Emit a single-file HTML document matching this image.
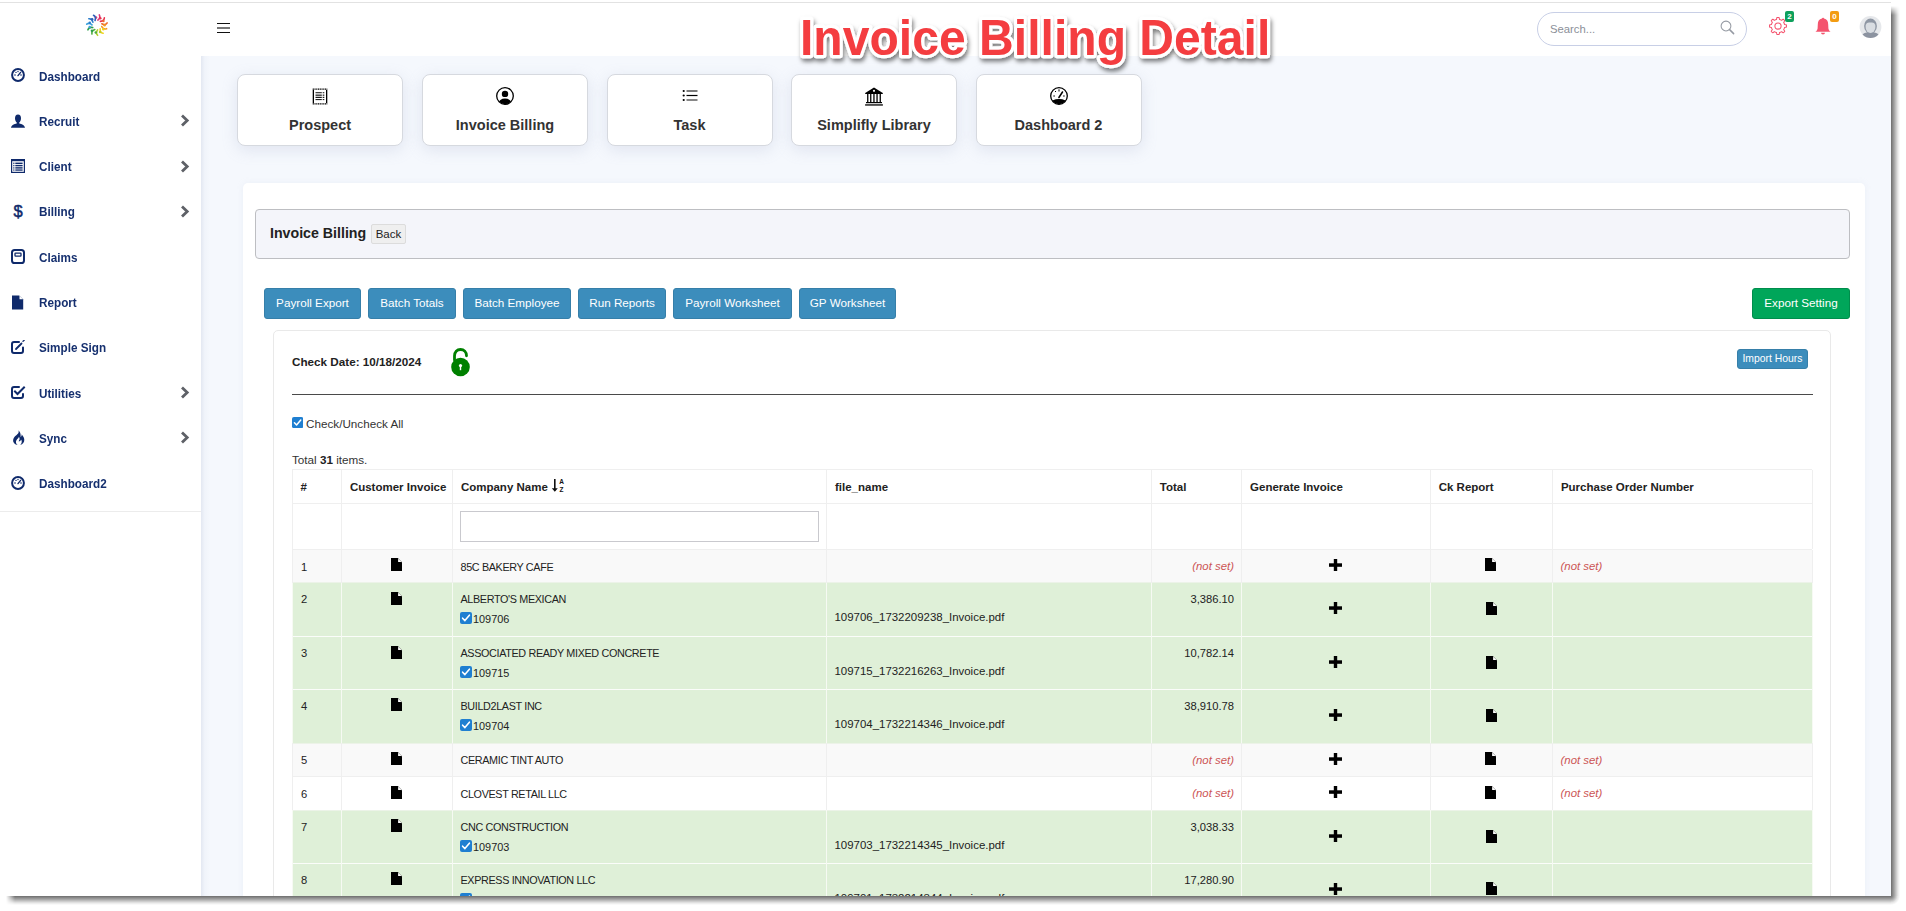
<!DOCTYPE html><html><head><meta charset="utf-8"><title>Invoice Billing Detail</title><style>
*{box-sizing:border-box;margin:0;padding:0}
html,body{width:1906px;height:911px;overflow:hidden;background:#fff;font-family:"Liberation Sans",sans-serif;position:relative}
.a{position:absolute;white-space:nowrap}
#topline{position:absolute;left:0;top:2px;width:1891px;height:1px;background:#e2e2e2}
#shadow{position:absolute;left:0;top:3px;width:1891px;height:893px;background:#f5f8fd}
#shR{position:absolute;left:1891px;top:6px;width:9px;height:890px;background:linear-gradient(90deg,rgba(0,0,0,.57),rgba(0,0,0,.36) 35%,rgba(0,0,0,.1) 75%,rgba(0,0,0,0));-webkit-mask-image:linear-gradient(180deg,transparent 0,#000 9px)}
#shB{position:absolute;left:6px;top:896px;width:1885px;height:9px;background:linear-gradient(180deg,rgba(0,0,0,.57),rgba(0,0,0,.36) 35%,rgba(0,0,0,.1) 75%,rgba(0,0,0,0));-webkit-mask-image:linear-gradient(90deg,transparent 0,#000 9px)}
#shC{position:absolute;left:1891px;top:896px;width:9px;height:9px;background:radial-gradient(circle at 0 0,rgba(0,0,0,.57),rgba(0,0,0,.36) 3px,rgba(0,0,0,.1) 6.5px,rgba(0,0,0,0) 9px)}
#clip{position:absolute;left:0;top:3px;width:1891px;height:893px;overflow:hidden}
#pg{position:absolute;left:0;top:-3px;width:1891px;height:896px}
#header{position:absolute;left:0;top:3px;width:1891px;height:53px;background:#fff}
#sidebar{position:absolute;left:0;top:56px;width:201px;height:840px;background:#fff}
#sideline{position:absolute;left:0;top:511px;width:201px;height:1px;background:#ececec}
.st{font-weight:bold;font-size:12.6px;color:#16306f;line-height:14px;transform:scaleX(.93);transform-origin:0 0}
.tile{position:absolute;top:73.5px;width:166px;height:72px;background:#fff;border:1px solid #d6d9df;border-radius:8px;box-shadow:0 4px 16px rgba(140,150,185,.2)}
.tile .tt{position:absolute;left:0;right:0;top:42.5px;text-align:center;font-weight:bold;font-size:14.5px;line-height:16px;color:#333}
.tile svg{position:absolute;top:12.3px;left:50%;transform:translateX(-50%)}
.btn{position:absolute;top:288px;height:31px;background:#3c8dbc;border:1px solid #367fa9;border-radius:3px;color:#fff;font-size:11.7px;line-height:27.5px;text-align:center;white-space:nowrap}
#card{position:absolute;left:242.5px;top:183px;width:1622px;height:760px;background:#fff;border-radius:5px;box-shadow:0 0 6px rgba(180,190,210,.15)}
#panel{position:absolute;left:255px;top:209px;width:1595px;height:50px;background:#f4f5fa;border:1px solid #bdbec2;border-radius:4px}
#inner{position:absolute;left:273px;top:330px;width:1558px;height:700px;border:1px solid #e9e9e9;border-radius:5px}
.cell{position:absolute;white-space:nowrap}
.th{font-weight:bold;font-size:11.5px;color:#222;line-height:14px}
.td{font-size:11.2px;color:#222;line-height:14px}
.up{font-size:10.8px;letter-spacing:-0.35px}
.ns{font-style:italic;color:#c55;font-size:11.4px;line-height:14px}
.vl{position:absolute;width:1px}
.hl{position:absolute;height:1px}
</style></head><body>
<div id="topline"></div><div id="shadow"></div><div id="shR"></div><div id="shB"></div><div id="shC"></div><div id="clip"><div id="pg">
<div id="header"></div>
<svg class="a" style="left:85px;top:13px" width="24" height="24" viewBox="0 0 24 24"><path d="M12.87,7.08 Q15.89,4.78 14.29,1.96" fill="none" stroke="#e0357a" stroke-width="1.6" stroke-linecap="round"/><circle cx="11.05" cy="4.46" r="1.25" fill="#e0357a"/><path d="M15.39,8.33 Q19.18,8.03 19.36,4.79" fill="none" stroke="#e8334f" stroke-width="1.6" stroke-linecap="round"/><circle cx="15.28" cy="5.14" r="1.25" fill="#e8334f"/><path d="M16.84,10.74 Q20.18,12.54 22.09,9.91" fill="none" stroke="#ee6a2c" stroke-width="1.6" stroke-linecap="round"/><circle cx="18.46" cy="8.00" r="1.25" fill="#ee6a2c"/><path d="M16.75,13.56 Q18.59,16.88 21.61,15.70" fill="none" stroke="#f39a1f" stroke-width="1.6" stroke-linecap="round"/><circle cx="19.60" cy="12.13" r="1.25" fill="#f39a1f"/><path d="M15.15,15.88 Q14.91,19.67 18.09,20.31" fill="none" stroke="#f0d21a" stroke-width="1.6" stroke-linecap="round"/><circle cx="18.32" cy="16.22" r="1.25" fill="#f0d21a"/><path d="M12.55,16.97 Q10.30,20.02 12.63,22.28" fill="none" stroke="#b5cf2a" stroke-width="1.6" stroke-linecap="round"/><circle cx="15.04" cy="18.97" r="1.25" fill="#b5cf2a"/><path d="M9.78,16.48 Q6.23,17.83 6.97,20.99" fill="none" stroke="#4fae3f" stroke-width="1.6" stroke-linecap="round"/><circle cx="10.79" cy="19.50" r="1.25" fill="#4fae3f"/><path d="M7.71,14.57 Q4.00,13.79 2.91,16.84" fill="none" stroke="#2e9e4c" stroke-width="1.6" stroke-linecap="round"/><circle cx="6.92" cy="17.66" r="1.25" fill="#2e9e4c"/><path d="M7.00,11.84 Q4.30,9.17 1.73,11.16" fill="none" stroke="#3aa0dc" stroke-width="1.6" stroke-linecap="round"/><circle cx="4.67" cy="14.01" r="1.25" fill="#3aa0dc"/><path d="M7.88,9.16 Q7.05,5.46 3.82,5.74" fill="none" stroke="#2a7ccc" stroke-width="1.6" stroke-linecap="round"/><circle cx="4.75" cy="9.73" r="1.25" fill="#2a7ccc"/><path d="M10.07,7.39 Q11.37,3.82 8.50,2.31" fill="none" stroke="#2f5fb8" stroke-width="1.6" stroke-linecap="round"/><circle cx="7.12" cy="6.17" r="1.25" fill="#2f5fb8"/></svg>
<div class="a" style="left:217px;top:23px;width:13px;height:1px;background:#111"></div>
<div class="a" style="left:217px;top:27px;width:13px;height:2px;background:#777"></div>
<div class="a" style="left:217px;top:32px;width:13px;height:1px;background:#111"></div>
<svg class="a" style="left:790px;top:8px;overflow:visible" width="500" height="62" viewBox="0 0 500 62"><defs><filter id="tsh" x="-5%" y="-20%" width="110%" height="150%"><feDropShadow dx="1.5" dy="3.2" stdDeviation="2.1" flood-color="#000" flood-opacity="0.5"/></filter></defs><text x="10" y="0" transform="translate(0,47) scale(1,1.045)" font-family="Liberation Sans" font-weight="bold" font-size="48.1" fill="#f43d41" stroke="#fff" stroke-width="6.2" stroke-linejoin="round" paint-order="stroke" filter="url(#tsh)">Invoice Billing Detail</text></svg>
<div class="a" style="left:1537px;top:12px;width:210px;height:34px;border:1px solid #c8cfe6;border-radius:17px;background:#fff"></div>
<div class="a" style="left:1550px;top:22px;font-size:11.3px;line-height:14px;color:#8b9099">Search...</div>
<svg class="a" style="left:1720px;top:20px" width="15" height="15" viewBox="0 0 15 15"><circle cx="6" cy="6" r="4.9" fill="none" stroke="#959aa3" stroke-width="1.05"/><line x1="9.6" y1="9.6" x2="13.6" y2="13.6" stroke="#959aa3" stroke-width="1.5" stroke-linecap="round"/></svg>
<svg class="a" style="left:1769px;top:17px" width="18" height="18" viewBox="0 0 18 18"><path d="M6.44,2.81 L6.60,2.75 L6.76,2.68 L6.93,2.63 L7.10,2.58 L7.27,2.53 L7.44,2.49 L7.56,2.24 L7.65,1.71 L7.75,1.10 L7.90,0.61 L8.10,0.45 L8.33,0.43 L8.55,0.41 L8.77,0.40 L9.00,0.40 L9.23,0.40 L9.45,0.41 L9.67,0.43 L9.90,0.45 L10.10,0.61 L10.25,1.10 L10.35,1.71 L10.44,2.24 L10.56,2.49 L10.73,2.53 L10.90,2.58 L11.07,2.63 L11.24,2.68 L11.40,2.75 L11.56,2.81 L11.73,2.88 L11.88,2.95 L12.04,3.03 L12.20,3.11 L12.35,3.20 L12.50,3.29 L12.77,3.20 L13.20,2.89 L13.70,2.53 L14.15,2.29 L14.41,2.32 L14.59,2.46 L14.75,2.61 L14.92,2.76 L15.08,2.92 L15.24,3.08 L15.39,3.25 L15.54,3.41 L15.68,3.59 L15.71,3.85 L15.47,4.30 L15.11,4.80 L14.80,5.23 L14.71,5.50 L14.80,5.65 L14.89,5.80 L14.97,5.96 L15.05,6.12 L15.12,6.27 L15.19,6.44 L15.25,6.60 L15.32,6.76 L15.37,6.93 L15.42,7.10 L15.47,7.27 L15.51,7.44 L15.76,7.56 L16.29,7.65 L16.90,7.75 L17.39,7.90 L17.55,8.10 L17.57,8.33 L17.59,8.55 L17.60,8.77 L17.60,9.00 L17.60,9.23 L17.59,9.45 L17.57,9.67 L17.55,9.90 L17.39,10.10 L16.90,10.25 L16.29,10.35 L15.76,10.44 L15.51,10.56 L15.47,10.73 L15.42,10.90 L15.37,11.07 L15.32,11.24 L15.25,11.40 L15.19,11.56 L15.12,11.73 L15.05,11.88 L14.97,12.04 L14.89,12.20 L14.80,12.35 L14.71,12.50 L14.80,12.77 L15.11,13.20 L15.47,13.70 L15.71,14.15 L15.68,14.41 L15.54,14.59 L15.39,14.75 L15.24,14.92 L15.08,15.08 L14.92,15.24 L14.75,15.39 L14.59,15.54 L14.41,15.68 L14.15,15.71 L13.70,15.47 L13.20,15.11 L12.77,14.80 L12.50,14.71 L12.35,14.80 L12.20,14.89 L12.04,14.97 L11.88,15.05 L11.73,15.12 L11.56,15.19 L11.40,15.25 L11.24,15.32 L11.07,15.37 L10.90,15.42 L10.73,15.47 L10.56,15.51 L10.44,15.76 L10.35,16.29 L10.25,16.90 L10.10,17.39 L9.90,17.55 L9.67,17.57 L9.45,17.59 L9.23,17.60 L9.00,17.60 L8.77,17.60 L8.55,17.59 L8.33,17.57 L8.10,17.55 L7.90,17.39 L7.75,16.90 L7.65,16.29 L7.56,15.76 L7.44,15.51 L7.27,15.47 L7.10,15.42 L6.93,15.37 L6.76,15.32 L6.60,15.25 L6.44,15.19 L6.27,15.12 L6.12,15.05 L5.96,14.97 L5.80,14.89 L5.65,14.80 L5.50,14.71 L5.23,14.80 L4.80,15.11 L4.30,15.47 L3.85,15.71 L3.59,15.68 L3.41,15.54 L3.25,15.39 L3.08,15.24 L2.92,15.08 L2.76,14.92 L2.61,14.75 L2.46,14.59 L2.32,14.41 L2.29,14.15 L2.53,13.70 L2.89,13.20 L3.20,12.77 L3.29,12.50 L3.20,12.35 L3.11,12.20 L3.03,12.04 L2.95,11.88 L2.88,11.73 L2.81,11.56 L2.75,11.40 L2.68,11.24 L2.63,11.07 L2.58,10.90 L2.53,10.73 L2.49,10.56 L2.24,10.44 L1.71,10.35 L1.10,10.25 L0.61,10.10 L0.45,9.90 L0.43,9.67 L0.41,9.45 L0.40,9.23 L0.40,9.00 L0.40,8.77 L0.41,8.55 L0.43,8.33 L0.45,8.10 L0.61,7.90 L1.10,7.75 L1.71,7.65 L2.24,7.56 L2.49,7.44 L2.53,7.27 L2.58,7.10 L2.63,6.93 L2.68,6.76 L2.75,6.60 L2.81,6.44 L2.88,6.27 L2.95,6.12 L3.03,5.96 L3.11,5.80 L3.20,5.65 L3.29,5.50 L3.20,5.23 L2.89,4.80 L2.53,4.30 L2.29,3.85 L2.32,3.59 L2.46,3.41 L2.61,3.25 L2.76,3.08 L2.92,2.92 L3.08,2.76 L3.25,2.61 L3.41,2.46 L3.59,2.32 L3.85,2.29 L4.30,2.53 L4.80,2.89 L5.23,3.20 L5.50,3.29 L5.65,3.20 L5.80,3.11 L5.96,3.03 L6.12,2.95 L6.27,2.88Z" fill="none" stroke="#f4516c" stroke-width="1.05" stroke-linejoin="round"/><circle cx="9" cy="9" r="3.1" fill="none" stroke="#f4516c" stroke-width="1.05"/></svg>
<div class="a" style="left:1785px;top:11px;width:9px;height:11px;background:#0ea05c;border-radius:2px;color:#fff;font-size:8px;font-weight:bold;line-height:11px;text-align:center">2</div>
<svg class="a" style="left:1815px;top:17px" width="16" height="18" viewBox="0 0 16 18"><path d="M8 0.8 C8.6 0.8 9 1.2 9 1.6 C12 2.2 13.2 4.6 13.2 7.5 L13.4 11.5 C13.6 13 14.6 14 15.6 14.8 L0.4 14.8 C1.4 14 2.4 13 2.6 11.5 L2.8 7.5 C2.8 4.6 4 2.2 7 1.6 C7 1.2 7.4 0.8 8 0.8Z" fill="#f4546e"/><path d="M6 15.8 A2 1.6 0 0 0 10 15.8Z" fill="#f4546e"/></svg>
<div class="a" style="left:1830px;top:11px;width:9px;height:11px;background:#f39c12;border-radius:2px;color:#fff;font-size:8px;font-weight:bold;line-height:11px;text-align:center">0</div>
<svg class="a" style="left:1859px;top:16px" width="23" height="22" viewBox="0 0 23 22"><defs><clipPath id="avc"><circle cx="11.5" cy="11" r="10.9"/></clipPath></defs><circle cx="11.5" cy="11" r="10.9" fill="#e6e8eb"/><g clip-path="url(#avc)"><ellipse cx="11.5" cy="20.5" rx="9" ry="4.6" fill="#8c93a0"/><ellipse cx="11.5" cy="10" rx="6.4" ry="7.6" fill="#8f97a4"/><ellipse cx="11.5" cy="10.9" rx="4.9" ry="6.2" fill="#d9dde2"/><path d="M6.5 6 C8 3.8 15 3.8 16.5 6 L16.5 7.5 C14 6 9 6 6.5 7.5Z" fill="#8f97a4"/></g></svg>
<div id="sidebar"></div><div id="sideline"></div>
<div class="a st" style="left:39px;top:69.6px">Dashboard</div>
<svg class="a" style="left:10.5px;top:68.2px" width="15" height="15" viewBox="0 0 15 15"><circle cx="7" cy="7" r="5.9" fill="none" stroke="#0f2a6b" stroke-width="2"/><path d="M7 7.6 L9.6 4.4" stroke="#0f2a6b" stroke-width="1.4" stroke-linecap="round"/><circle cx="4" cy="7" r=".8" fill="#0f2a6b"/><circle cx="5" cy="4.4" r=".7" fill="#0f2a6b"/><circle cx="7" cy="3.5" r=".7" fill="#0f2a6b"/><circle cx="10" cy="7" r=".8" fill="#0f2a6b"/></svg>
<div class="a st" style="left:39px;top:114.9px">Recruit</div>
<svg class="a" style="left:10.5px;top:113.5px" width="15" height="15" viewBox="0 0 15 15"><path d="M7 0.5 C9 0.5 10 2 10 4.2 C10 6.4 9 8 8.2 8.6 L8.3 9.4 C10.5 10 13.5 10.8 14 13.8 L0 13.8 C0.5 10.8 3.5 10 5.7 9.4 L5.8 8.6 C5 8 4 6.4 4 4.2 C4 2 5 0.5 7 0.5Z" fill="#0f2a6b"/></svg>
<svg class="a" style="left:180px;top:114.3px" width="10" height="13" viewBox="0 0 10 13"><path d="M2 1.5 L7.2 6.5 L2 11.5" fill="none" stroke="#5e6167" stroke-width="2.8" stroke-linejoin="miter"/></svg>
<div class="a st" style="left:39px;top:160.1px">Client</div>
<svg class="a" style="left:10.5px;top:158.7px" width="15" height="15" viewBox="0 0 15 15"><rect x="0.6" y="0.6" width="12.8" height="12.8" fill="none" stroke="#0f2a6b" stroke-width="1.2"/><rect x="0.6" y="0.6" width="12.8" height="1.6" fill="#0f2a6b"/><rect x="2.3" y="3.6" width="1.1" height="1.4" fill="#0f2a6b"/><rect x="4.3" y="3.6" width="7.3" height="1.4" fill="#0f2a6b"/><rect x="2.3" y="5.9" width="1.1" height="1.4" fill="#0f2a6b"/><rect x="4.3" y="5.9" width="7.3" height="1.4" fill="#0f2a6b"/><rect x="2.3" y="8.2" width="1.1" height="1.4" fill="#0f2a6b"/><rect x="4.3" y="8.2" width="7.3" height="1.4" fill="#0f2a6b"/><rect x="2.3" y="10.4" width="1.1" height="1.3" fill="#0f2a6b"/><rect x="4.3" y="10.4" width="7.3" height="1.3" fill="#0f2a6b"/></svg>
<svg class="a" style="left:180px;top:159.5px" width="10" height="13" viewBox="0 0 10 13"><path d="M2 1.5 L7.2 6.5 L2 11.5" fill="none" stroke="#5e6167" stroke-width="2.8" stroke-linejoin="miter"/></svg>
<div class="a st" style="left:39px;top:205.4px">Billing</div>
<svg class="a" style="left:10.5px;top:204.0px" width="15" height="15" viewBox="0 0 15 15"><text x="7" y="12.6" text-anchor="middle" font-family="Liberation Sans" font-size="16.5" fill="#0f2a6b" stroke="#0f2a6b" stroke-width=".5">$</text></svg>
<svg class="a" style="left:180px;top:204.8px" width="10" height="13" viewBox="0 0 10 13"><path d="M2 1.5 L7.2 6.5 L2 11.5" fill="none" stroke="#5e6167" stroke-width="2.8" stroke-linejoin="miter"/></svg>
<div class="a st" style="left:39px;top:250.7px">Claims</div>
<svg class="a" style="left:10.5px;top:249.3px" width="15" height="15" viewBox="0 0 15 15"><rect x="1" y="1" width="12" height="13" rx="2.6" fill="none" stroke="#0f2a6b" stroke-width="2"/><rect x="4" y="4.2" width="6" height="3" rx=".6" fill="none" stroke="#0f2a6b" stroke-width="1.3"/></svg>
<div class="a st" style="left:39px;top:296.0px">Report</div>
<svg class="a" style="left:10.5px;top:294.6px" width="15" height="15" viewBox="0 0 15 15"><path d="M1 0.5 L8.2 0.5 L12.2 4.5 L12.2 14.5 L1 14.5Z" fill="#0f2a6b"/><path d="M8.5 0.8 L8.5 4.2 L11.9 4.2Z" fill="#fff"/></svg>
<div class="a st" style="left:39px;top:341.2px">Simple Sign</div>
<svg class="a" style="left:10.5px;top:339.8px" width="15" height="15" viewBox="0 0 15 15"><path d="M8 2 L3 2 C1.8 2 1 2.8 1 4 L1 11 C1 12.2 1.8 13 3 13 L10 13 C11.2 13 12 12.2 12 11 L12 7.5" fill="none" stroke="#0f2a6b" stroke-width="2" stroke-linecap="round"/><path d="M5 9 L10.5 3.5" stroke="#0f2a6b" stroke-width="1.8" stroke-linecap="round"/><path d="M12 1.3 L13.2 .3" stroke="#0f2a6b" stroke-width="1.3" stroke-linecap="round"/></svg>
<div class="a st" style="left:39px;top:386.5px">Utilities</div>
<svg class="a" style="left:10.5px;top:385.1px" width="15" height="15" viewBox="0 0 15 15"><path d="M8 2 L3 2 C1.8 2 1 2.8 1 4 L1 11 C1 12.2 1.8 13 3 13 L10 13 C11.2 13 12 12.2 12 11 L12 9" fill="none" stroke="#0f2a6b" stroke-width="2" stroke-linecap="round"/><path d="M4 6.5 L6.5 9 L13 2.5" fill="none" stroke="#0f2a6b" stroke-width="2" stroke-linecap="square"/></svg>
<svg class="a" style="left:180px;top:385.9px" width="10" height="13" viewBox="0 0 10 13"><path d="M2 1.5 L7.2 6.5 L2 11.5" fill="none" stroke="#5e6167" stroke-width="2.8" stroke-linejoin="miter"/></svg>
<div class="a st" style="left:39px;top:431.8px">Sync</div>
<svg class="a" style="left:10.5px;top:430.4px" width="15" height="15" viewBox="0 0 15 15"><path d="M7.2 0.2 C8.6 2.4 6.8 4 5 5.4 C2.2 7.6 1.2 10.8 3.2 13.2 C4.2 14.3 5.6 14.8 6.6 14.9 C4.9 13.6 4.4 11.6 5.6 9.9 C6.4 8.8 7.6 8.2 7.9 6.8 C9.2 8.6 8.4 10.2 7.6 11.2 C9 11.4 9.8 10.4 10 9.4 C11.4 11 10.8 13.4 9.2 14.9 C11.8 14.4 13.4 12.4 13.3 9.8 C13.2 7.4 11.8 5.9 10.6 4.3 C10.8 5.6 10.4 6.6 9.6 7 C10 4.2 9.2 1.6 7.2 0.2Z" fill="#0f2a6b"/></svg>
<svg class="a" style="left:180px;top:431.2px" width="10" height="13" viewBox="0 0 10 13"><path d="M2 1.5 L7.2 6.5 L2 11.5" fill="none" stroke="#5e6167" stroke-width="2.8" stroke-linejoin="miter"/></svg>
<div class="a st" style="left:39px;top:477.0px">Dashboard2</div>
<svg class="a" style="left:10.5px;top:475.6px" width="15" height="15" viewBox="0 0 15 15"><circle cx="7" cy="7" r="5.9" fill="none" stroke="#0f2a6b" stroke-width="2"/><path d="M7 7.6 L9.6 4.4" stroke="#0f2a6b" stroke-width="1.4" stroke-linecap="round"/><circle cx="4" cy="7" r=".8" fill="#0f2a6b"/><circle cx="5" cy="4.4" r=".7" fill="#0f2a6b"/><circle cx="7" cy="3.5" r=".7" fill="#0f2a6b"/><circle cx="10" cy="7" r=".8" fill="#0f2a6b"/></svg>
<div class="a" style="left:201px;top:56px;width:9px;height:840px;background:linear-gradient(90deg,rgba(205,212,228,.45),rgba(225,230,242,.25) 40%,rgba(243,246,251,0))"></div>
<div class="tile" style="left:237px"><svg style="margin-left:-0.5px;margin-top:1.3px" width="17" height="17" viewBox="0 0 17 17"><rect x="1.2" y="1.8" width="1.3" height="13.4" fill="#000"/><rect x="14.5" y="1.8" width="1.3" height="13.4" fill="#000"/><path d="M1.2 1.2 H15.8 M1.2 15.8 H15.8" stroke="#000" stroke-width="1.3" stroke-dasharray="1.2 .55"/><rect x="4" y="4" width="6.3" height="1.3" fill="#444"/><rect x="11.2" y="4" width="1.6" height="1.3" fill="#444"/><rect x="4" y="6.6" width="6.3" height="1.1" fill="#000"/><rect x="11.2" y="6.6" width="1.6" height="1.1" fill="#000"/><rect x="4" y="8.8" width="6.3" height="1.1" fill="#000"/><rect x="11.2" y="8.8" width="1.6" height="1.1" fill="#000"/><rect x="4" y="11" width="6.3" height="1.1" fill="#222"/><rect x="11.2" y="11" width="1.6" height="1.1" fill="#222"/></svg><div class="tt">Prospect</div></div>
<div class="tile" style="left:422px"><svg width="18" height="18" viewBox="0 0 18 18"><defs><clipPath id="uc"><circle cx="9" cy="9" r="8.2"/></clipPath></defs><circle cx="9" cy="9" r="8.3" fill="none" stroke="#000" stroke-width="1.3"/><circle cx="9" cy="6.9" r="3.2" fill="#000"/><g clip-path="url(#uc)"><ellipse cx="9" cy="16.5" rx="6.5" ry="5" fill="#000"/></g></svg><div class="tt">Invoice Billing</div></div>
<div class="tile" style="left:606.5px"><svg width="17" height="17" viewBox="0 0 17 17"><circle cx="2.2" cy="4" r="1.1" fill="#000"/><circle cx="2.2" cy="8.5" r="1.1" fill="#000"/><circle cx="2.2" cy="13" r="1.1" fill="#000"/><rect x="5" y="3.3" width="11" height="1.4" fill="#444"/><rect x="5" y="7.9" width="11" height="1.2" fill="#000"/><rect x="5" y="12.3" width="11" height="1.4" fill="#555"/></svg><div class="tt">Task</div></div>
<div class="tile" style="left:791px"><svg width="19" height="19" viewBox="0 0 19 19"><path d="M9.5 0.5 L18.3 6 L18.3 7 L0.7 7 L0.7 6Z" fill="#000"/><circle cx="9.5" cy="3.8" r="1.1" fill="#fff"/><rect x="2.6" y="7" width="1.3" height="8.2" fill="#000"/><rect x="5.6" y="7" width="1.3" height="8.2" fill="#000"/><rect x="8.8" y="7" width="1.3" height="8.2" fill="#000"/><rect x="11.9" y="7" width="1.3" height="8.2" fill="#000"/><rect x="15.1" y="7" width="1.3" height="8.2" fill="#000"/><rect x="1.5" y="15" width="16" height="1.2" fill="#000"/><rect x="0.6" y="17.3" width="17.8" height="1.3" fill="#000"/></svg><div class="tt">Simplifly Library</div></div>
<div class="tile" style="left:975.5px"><svg width="18" height="18" viewBox="0 0 18 18"><defs><clipPath id="gc"><circle cx="9" cy="9" r="8.2"/></clipPath></defs><circle cx="9" cy="9" r="8.3" fill="none" stroke="#000" stroke-width="1.3"/><g clip-path="url(#gc)"><ellipse cx="9" cy="16.5" rx="8.5" ry="4.6" fill="#000"/></g><rect x="8.5" y="2.3" width="1" height="2.2" fill="#000"/><path d="M5 4 L6 5" stroke="#000" stroke-width="1"/><rect x="3.3" y="8.4" width="1.6" height="1.2" fill="#333"/><rect x="13.1" y="8.4" width="1.6" height="1.2" fill="#333"/><path d="M8.9 10.5 L12.5 5" stroke="#000" stroke-width="1.5" stroke-linecap="round"/></svg><div class="tt">Dashboard 2</div></div>
<div id="card"></div>
<div id="panel"></div>
<div class="a" style="left:270px;top:225.3px;font-weight:bold;font-size:14.2px;line-height:16px;color:#222">Invoice Billing</div>
<div class="a" style="left:371px;top:224px;width:35px;height:20px;background:#efefef;border:1px solid #dcdcdc;border-radius:2px;font-size:11.5px;line-height:18px;text-align:center;color:#222">Back</div>
<div class="btn" style="left:264px;width:97px">Payroll Export</div>
<div class="btn" style="left:368px;width:88px">Batch Totals</div>
<div class="btn" style="left:463px;width:108px">Batch Employee</div>
<div class="btn" style="left:578px;width:88px">Run Reports</div>
<div class="btn" style="left:673px;width:119px">Payroll Worksheet</div>
<div class="btn" style="left:799px;width:97px">GP Worksheet</div>
<div class="btn" style="left:1752px;width:98px;background:#00a65a;border-color:#008d4c">Export Setting</div>
<div id="inner"></div>
<div class="a" style="left:292px;top:355px;font-weight:bold;font-size:11.7px;line-height:14px;color:#222">Check Date: 10/18/2024</div>
<svg class="a" style="left:450px;top:348px" width="21" height="29" viewBox="0 0 21 29"><path d="M4.5 12 L4.5 8 C4.5 4 7 1.5 10.5 1.5 C14 1.5 16.5 4 16.5 7.8" fill="none" stroke="#008000" stroke-width="2.8" stroke-linecap="round"/><circle cx="10.5" cy="19" r="9.3" fill="#008000"/><circle cx="10.5" cy="17.6" r="1.6" fill="#fff"/><rect x="9.8" y="17.6" width="1.4" height="4.6" fill="#fff"/></svg>
<div class="btn" style="left:1737px;top:349px;width:71px;height:20px;font-size:10.4px;line-height:17px;border-radius:3px">Import Hours</div>
<div class="a" style="left:292px;top:394px;width:1521px;height:1px;background:#4a4a4a"></div>
<svg class="a" style="left:292px;top:417px" width="11.2" height="11.2" viewBox="0 0 12 12"><rect x="0" y="0" width="12" height="12" rx="2" fill="#1f7fd1"/><path d="M2.6 6.2 L4.9 8.6 L9.4 3.2" fill="none" stroke="#fff" stroke-width="1.6" stroke-linecap="round" stroke-linejoin="round"/></svg>
<div class="a" style="left:306px;top:417px;font-size:11.7px;line-height:14px;color:#333">Check/Uncheck All</div>
<div class="a" style="left:292px;top:453px;font-size:11.7px;line-height:14px;color:#333">Total <b style="color:#222">31</b> items.</div>
<div class="a" style="left:292px;top:469.5px;width:1520.4px;height:33.7px;background:#fff"></div>
<div class="a" style="left:292px;top:503.2px;width:1520.4px;height:46.3px;background:#fff"></div>
<div class="a" style="left:292px;top:549.5px;width:1520.4px;height:33.0px;background:#f9f9f9"></div>
<div class="a" style="left:292px;top:582.5px;width:1520.4px;height:54.0px;background:#dff0d8"></div>
<div class="a" style="left:292px;top:636.5px;width:1520.4px;height:53.0px;background:#dff0d8"></div>
<div class="a" style="left:292px;top:689.5px;width:1520.4px;height:53.5px;background:#dff0d8"></div>
<div class="a" style="left:292px;top:743.0px;width:1520.4px;height:33.6px;background:#f9f9f9"></div>
<div class="a" style="left:292px;top:776.6px;width:1520.4px;height:33.7px;background:#fff"></div>
<div class="a" style="left:292px;top:810.3px;width:1520.4px;height:52.9px;background:#dff0d8"></div>
<div class="a" style="left:292px;top:863.2px;width:1520.4px;height:53.3px;background:#dff0d8"></div>
<div class="hl" style="left:292px;top:469.0px;width:1520.4px;background:#efefef"></div>
<div class="hl" style="left:292px;top:502.7px;width:1520.4px;background:#efefef"></div>
<div class="hl" style="left:292px;top:549.0px;width:1520.4px;background:#efefef"></div>
<div class="hl" style="left:292px;top:582.0px;width:1520.4px;background:#ecf3e8"></div>
<div class="hl" style="left:292px;top:636.0px;width:1520.4px;background:#fbfdfa"></div>
<div class="hl" style="left:292px;top:689.0px;width:1520.4px;background:#fbfdfa"></div>
<div class="hl" style="left:292px;top:742.5px;width:1520.4px;background:#ecf3e8"></div>
<div class="hl" style="left:292px;top:776.1px;width:1520.4px;background:#efefef"></div>
<div class="hl" style="left:292px;top:809.8px;width:1520.4px;background:#ecf3e8"></div>
<div class="hl" style="left:292px;top:862.7px;width:1520.4px;background:#fbfdfa"></div>
<div class="vl" style="left:291.5px;top:469.5px;height:33.7px;background:#efefef"></div>
<div class="vl" style="left:340.9px;top:469.5px;height:33.7px;background:#efefef"></div>
<div class="vl" style="left:451.9px;top:469.5px;height:33.7px;background:#efefef"></div>
<div class="vl" style="left:826.0px;top:469.5px;height:33.7px;background:#efefef"></div>
<div class="vl" style="left:1150.8px;top:469.5px;height:33.7px;background:#efefef"></div>
<div class="vl" style="left:1241.1px;top:469.5px;height:33.7px;background:#efefef"></div>
<div class="vl" style="left:1429.7px;top:469.5px;height:33.7px;background:#efefef"></div>
<div class="vl" style="left:1551.9px;top:469.5px;height:33.7px;background:#efefef"></div>
<div class="vl" style="left:1811.9px;top:469.5px;height:33.7px;background:#efefef"></div>
<div class="vl" style="left:291.5px;top:503.2px;height:46.3px;background:#efefef"></div>
<div class="vl" style="left:340.9px;top:503.2px;height:46.3px;background:#efefef"></div>
<div class="vl" style="left:451.9px;top:503.2px;height:46.3px;background:#efefef"></div>
<div class="vl" style="left:826.0px;top:503.2px;height:46.3px;background:#efefef"></div>
<div class="vl" style="left:1150.8px;top:503.2px;height:46.3px;background:#efefef"></div>
<div class="vl" style="left:1241.1px;top:503.2px;height:46.3px;background:#efefef"></div>
<div class="vl" style="left:1429.7px;top:503.2px;height:46.3px;background:#efefef"></div>
<div class="vl" style="left:1551.9px;top:503.2px;height:46.3px;background:#efefef"></div>
<div class="vl" style="left:1811.9px;top:503.2px;height:46.3px;background:#efefef"></div>
<div class="vl" style="left:291.5px;top:549.5px;height:33.0px;background:#efefef"></div>
<div class="vl" style="left:340.9px;top:549.5px;height:33.0px;background:#efefef"></div>
<div class="vl" style="left:451.9px;top:549.5px;height:33.0px;background:#efefef"></div>
<div class="vl" style="left:826.0px;top:549.5px;height:33.0px;background:#efefef"></div>
<div class="vl" style="left:1150.8px;top:549.5px;height:33.0px;background:#efefef"></div>
<div class="vl" style="left:1241.1px;top:549.5px;height:33.0px;background:#efefef"></div>
<div class="vl" style="left:1429.7px;top:549.5px;height:33.0px;background:#efefef"></div>
<div class="vl" style="left:1551.9px;top:549.5px;height:33.0px;background:#efefef"></div>
<div class="vl" style="left:1811.9px;top:549.5px;height:33.0px;background:#efefef"></div>
<div class="vl" style="left:291.5px;top:582.5px;height:54.0px;background:#f6faf3"></div>
<div class="vl" style="left:340.9px;top:582.5px;height:54.0px;background:#f6faf3"></div>
<div class="vl" style="left:451.9px;top:582.5px;height:54.0px;background:#f6faf3"></div>
<div class="vl" style="left:826.0px;top:582.5px;height:54.0px;background:#f6faf3"></div>
<div class="vl" style="left:1150.8px;top:582.5px;height:54.0px;background:#f6faf3"></div>
<div class="vl" style="left:1241.1px;top:582.5px;height:54.0px;background:#f6faf3"></div>
<div class="vl" style="left:1429.7px;top:582.5px;height:54.0px;background:#f6faf3"></div>
<div class="vl" style="left:1551.9px;top:582.5px;height:54.0px;background:#f6faf3"></div>
<div class="vl" style="left:1811.9px;top:582.5px;height:54.0px;background:#f6faf3"></div>
<div class="vl" style="left:291.5px;top:636.5px;height:53.0px;background:#f6faf3"></div>
<div class="vl" style="left:340.9px;top:636.5px;height:53.0px;background:#f6faf3"></div>
<div class="vl" style="left:451.9px;top:636.5px;height:53.0px;background:#f6faf3"></div>
<div class="vl" style="left:826.0px;top:636.5px;height:53.0px;background:#f6faf3"></div>
<div class="vl" style="left:1150.8px;top:636.5px;height:53.0px;background:#f6faf3"></div>
<div class="vl" style="left:1241.1px;top:636.5px;height:53.0px;background:#f6faf3"></div>
<div class="vl" style="left:1429.7px;top:636.5px;height:53.0px;background:#f6faf3"></div>
<div class="vl" style="left:1551.9px;top:636.5px;height:53.0px;background:#f6faf3"></div>
<div class="vl" style="left:1811.9px;top:636.5px;height:53.0px;background:#f6faf3"></div>
<div class="vl" style="left:291.5px;top:689.5px;height:53.5px;background:#f6faf3"></div>
<div class="vl" style="left:340.9px;top:689.5px;height:53.5px;background:#f6faf3"></div>
<div class="vl" style="left:451.9px;top:689.5px;height:53.5px;background:#f6faf3"></div>
<div class="vl" style="left:826.0px;top:689.5px;height:53.5px;background:#f6faf3"></div>
<div class="vl" style="left:1150.8px;top:689.5px;height:53.5px;background:#f6faf3"></div>
<div class="vl" style="left:1241.1px;top:689.5px;height:53.5px;background:#f6faf3"></div>
<div class="vl" style="left:1429.7px;top:689.5px;height:53.5px;background:#f6faf3"></div>
<div class="vl" style="left:1551.9px;top:689.5px;height:53.5px;background:#f6faf3"></div>
<div class="vl" style="left:1811.9px;top:689.5px;height:53.5px;background:#f6faf3"></div>
<div class="vl" style="left:291.5px;top:743.0px;height:33.6px;background:#efefef"></div>
<div class="vl" style="left:340.9px;top:743.0px;height:33.6px;background:#efefef"></div>
<div class="vl" style="left:451.9px;top:743.0px;height:33.6px;background:#efefef"></div>
<div class="vl" style="left:826.0px;top:743.0px;height:33.6px;background:#efefef"></div>
<div class="vl" style="left:1150.8px;top:743.0px;height:33.6px;background:#efefef"></div>
<div class="vl" style="left:1241.1px;top:743.0px;height:33.6px;background:#efefef"></div>
<div class="vl" style="left:1429.7px;top:743.0px;height:33.6px;background:#efefef"></div>
<div class="vl" style="left:1551.9px;top:743.0px;height:33.6px;background:#efefef"></div>
<div class="vl" style="left:1811.9px;top:743.0px;height:33.6px;background:#efefef"></div>
<div class="vl" style="left:291.5px;top:776.6px;height:33.7px;background:#efefef"></div>
<div class="vl" style="left:340.9px;top:776.6px;height:33.7px;background:#efefef"></div>
<div class="vl" style="left:451.9px;top:776.6px;height:33.7px;background:#efefef"></div>
<div class="vl" style="left:826.0px;top:776.6px;height:33.7px;background:#efefef"></div>
<div class="vl" style="left:1150.8px;top:776.6px;height:33.7px;background:#efefef"></div>
<div class="vl" style="left:1241.1px;top:776.6px;height:33.7px;background:#efefef"></div>
<div class="vl" style="left:1429.7px;top:776.6px;height:33.7px;background:#efefef"></div>
<div class="vl" style="left:1551.9px;top:776.6px;height:33.7px;background:#efefef"></div>
<div class="vl" style="left:1811.9px;top:776.6px;height:33.7px;background:#efefef"></div>
<div class="vl" style="left:291.5px;top:810.3px;height:52.9px;background:#f6faf3"></div>
<div class="vl" style="left:340.9px;top:810.3px;height:52.9px;background:#f6faf3"></div>
<div class="vl" style="left:451.9px;top:810.3px;height:52.9px;background:#f6faf3"></div>
<div class="vl" style="left:826.0px;top:810.3px;height:52.9px;background:#f6faf3"></div>
<div class="vl" style="left:1150.8px;top:810.3px;height:52.9px;background:#f6faf3"></div>
<div class="vl" style="left:1241.1px;top:810.3px;height:52.9px;background:#f6faf3"></div>
<div class="vl" style="left:1429.7px;top:810.3px;height:52.9px;background:#f6faf3"></div>
<div class="vl" style="left:1551.9px;top:810.3px;height:52.9px;background:#f6faf3"></div>
<div class="vl" style="left:1811.9px;top:810.3px;height:52.9px;background:#f6faf3"></div>
<div class="vl" style="left:291.5px;top:863.2px;height:53.3px;background:#f6faf3"></div>
<div class="vl" style="left:340.9px;top:863.2px;height:53.3px;background:#f6faf3"></div>
<div class="vl" style="left:451.9px;top:863.2px;height:53.3px;background:#f6faf3"></div>
<div class="vl" style="left:826.0px;top:863.2px;height:53.3px;background:#f6faf3"></div>
<div class="vl" style="left:1150.8px;top:863.2px;height:53.3px;background:#f6faf3"></div>
<div class="vl" style="left:1241.1px;top:863.2px;height:53.3px;background:#f6faf3"></div>
<div class="vl" style="left:1429.7px;top:863.2px;height:53.3px;background:#f6faf3"></div>
<div class="vl" style="left:1551.9px;top:863.2px;height:53.3px;background:#f6faf3"></div>
<div class="vl" style="left:1811.9px;top:863.2px;height:53.3px;background:#f6faf3"></div>
<div class="cell th" style="left:300.5px;top:480px">#</div>
<div class="cell th" style="left:349.9px;top:480px">Customer Invoice</div>
<div class="cell th" style="left:460.9px;top:480px">Company Name</div>
<div class="cell th" style="left:835.0px;top:480px">file_name</div>
<div class="cell th" style="left:1159.8px;top:480px">Total</div>
<div class="cell th" style="left:1250.1px;top:480px">Generate Invoice</div>
<div class="cell th" style="left:1438.7px;top:480px">Ck Report</div>
<div class="cell th" style="left:1560.9px;top:480px">Purchase Order Number</div>
<svg class="a" style="left:551px;top:478px" width="14" height="15" viewBox="0 0 14 15"><rect x="3" y="1" width="1.6" height="11.5" fill="#111"/><path d="M0.8 10.3 L6.8 10.3 L3.8 13.8Z" fill="#111"/><text x="10.5" y="6" text-anchor="middle" font-family="Liberation Sans" font-weight="bold" font-size="6.5" fill="#111">A</text><text x="10.5" y="13.6" text-anchor="middle" font-family="Liberation Sans" font-weight="bold" font-size="6.5" fill="#111">Z</text></svg>
<div class="a" style="left:460px;top:511px;width:359px;height:31px;border:1px solid #c9c9ce;background:#fff"></div>
<div class="cell td" style="left:301px;top:559.5px">1</div>
<svg class="a" style="left:391px;top:558px" width="11" height="13" viewBox="0 0 11 13"><path d="M0 0 L6.8 0 L11 4.2 L11 13 L0 13Z" fill="#000"/><path d="M7.1 0.4 L7.1 3.9 L10.6 3.9Z" fill="#fff"/></svg>
<div class="cell td up" style="left:460.5px;top:559.5px">85C BAKERY CAFE</div>
<div class="cell ns" style="right:657px;top:558.7px">(not set)</div>
<svg class="a" style="left:1329px;top:559px" width="13" height="12" viewBox="0 0 13 12"><rect x="0" y="4.3" width="13" height="3.5" fill="#000"/><rect x="4.8" y="0" width="3.4" height="12" fill="#000"/></svg>
<svg class="a" style="left:1485px;top:558px" width="11" height="13" viewBox="0 0 11 13"><path d="M0 0 L6.8 0 L11 4.2 L11 13 L0 13Z" fill="#000"/><path d="M7.1 0.4 L7.1 3.9 L10.6 3.9Z" fill="#fff"/></svg>
<div class="cell ns" style="left:1560.5px;top:558.7px">(not set)</div>
<div class="cell td" style="left:301px;top:592.3px">2</div>
<svg class="a" style="left:391px;top:592px" width="11" height="13" viewBox="0 0 11 13"><path d="M0 0 L6.8 0 L11 4.2 L11 13 L0 13Z" fill="#000"/><path d="M7.1 0.4 L7.1 3.9 L10.6 3.9Z" fill="#fff"/></svg>
<div class="cell td up" style="left:460.5px;top:592.3px">ALBERTO'S MEXICAN</div>
<svg class="a" style="left:460px;top:612px" width="12" height="12" viewBox="0 0 12 12"><rect x="0" y="0" width="12" height="12" rx="2" fill="#1f7fd1"/><path d="M2.6 6.2 L4.9 8.6 L9.4 3.2" fill="none" stroke="#fff" stroke-width="1.6" stroke-linecap="round" stroke-linejoin="round"/></svg>
<div class="cell td" style="left:473px;top:612.3px;font-size:10.9px">109706</div>
<div class="cell td" style="left:834.5px;top:610.3px;font-size:11.45px">109706_1732209238_Invoice.pdf</div>
<div class="cell td" style="right:657px;top:592.3px">3,386.10</div>
<svg class="a" style="left:1329px;top:602px" width="13" height="12" viewBox="0 0 13 12"><rect x="0" y="4.3" width="13" height="3.5" fill="#000"/><rect x="4.8" y="0" width="3.4" height="12" fill="#000"/></svg>
<svg class="a" style="left:1486px;top:602px" width="11" height="13" viewBox="0 0 11 13"><path d="M0 0 L6.8 0 L11 4.2 L11 13 L0 13Z" fill="#000"/><path d="M7.1 0.4 L7.1 3.9 L10.6 3.9Z" fill="#fff"/></svg>
<div class="cell td" style="left:301px;top:646.3px">3</div>
<svg class="a" style="left:391px;top:646px" width="11" height="13" viewBox="0 0 11 13"><path d="M0 0 L6.8 0 L11 4.2 L11 13 L0 13Z" fill="#000"/><path d="M7.1 0.4 L7.1 3.9 L10.6 3.9Z" fill="#fff"/></svg>
<div class="cell td up" style="left:460.5px;top:646.3px">ASSOCIATED READY MIXED CONCRETE</div>
<svg class="a" style="left:460px;top:666px" width="12" height="12" viewBox="0 0 12 12"><rect x="0" y="0" width="12" height="12" rx="2" fill="#1f7fd1"/><path d="M2.6 6.2 L4.9 8.6 L9.4 3.2" fill="none" stroke="#fff" stroke-width="1.6" stroke-linecap="round" stroke-linejoin="round"/></svg>
<div class="cell td" style="left:473px;top:666.3px;font-size:10.9px">109715</div>
<div class="cell td" style="left:834.5px;top:664.3px;font-size:11.45px">109715_1732216263_Invoice.pdf</div>
<div class="cell td" style="right:657px;top:646.3px">10,782.14</div>
<svg class="a" style="left:1329px;top:656px" width="13" height="12" viewBox="0 0 13 12"><rect x="0" y="4.3" width="13" height="3.5" fill="#000"/><rect x="4.8" y="0" width="3.4" height="12" fill="#000"/></svg>
<svg class="a" style="left:1486px;top:656px" width="11" height="13" viewBox="0 0 11 13"><path d="M0 0 L6.8 0 L11 4.2 L11 13 L0 13Z" fill="#000"/><path d="M7.1 0.4 L7.1 3.9 L10.6 3.9Z" fill="#fff"/></svg>
<div class="cell td" style="left:301px;top:699.3px">4</div>
<svg class="a" style="left:391px;top:698px" width="11" height="13" viewBox="0 0 11 13"><path d="M0 0 L6.8 0 L11 4.2 L11 13 L0 13Z" fill="#000"/><path d="M7.1 0.4 L7.1 3.9 L10.6 3.9Z" fill="#fff"/></svg>
<div class="cell td up" style="left:460.5px;top:699.3px">BUILD2LAST INC</div>
<svg class="a" style="left:460px;top:719px" width="12" height="12" viewBox="0 0 12 12"><rect x="0" y="0" width="12" height="12" rx="2" fill="#1f7fd1"/><path d="M2.6 6.2 L4.9 8.6 L9.4 3.2" fill="none" stroke="#fff" stroke-width="1.6" stroke-linecap="round" stroke-linejoin="round"/></svg>
<div class="cell td" style="left:473px;top:719.3px;font-size:10.9px">109704</div>
<div class="cell td" style="left:834.5px;top:717.3px;font-size:11.45px">109704_1732214346_Invoice.pdf</div>
<div class="cell td" style="right:657px;top:699.3px">38,910.78</div>
<svg class="a" style="left:1329px;top:709px" width="13" height="12" viewBox="0 0 13 12"><rect x="0" y="4.3" width="13" height="3.5" fill="#000"/><rect x="4.8" y="0" width="3.4" height="12" fill="#000"/></svg>
<svg class="a" style="left:1486px;top:709px" width="11" height="13" viewBox="0 0 11 13"><path d="M0 0 L6.8 0 L11 4.2 L11 13 L0 13Z" fill="#000"/><path d="M7.1 0.4 L7.1 3.9 L10.6 3.9Z" fill="#fff"/></svg>
<div class="cell td" style="left:301px;top:753.3px">5</div>
<svg class="a" style="left:391px;top:752px" width="11" height="13" viewBox="0 0 11 13"><path d="M0 0 L6.8 0 L11 4.2 L11 13 L0 13Z" fill="#000"/><path d="M7.1 0.4 L7.1 3.9 L10.6 3.9Z" fill="#fff"/></svg>
<div class="cell td up" style="left:460.5px;top:753.3px">CERAMIC TINT AUTO</div>
<div class="cell ns" style="right:657px;top:752.5px">(not set)</div>
<svg class="a" style="left:1329px;top:753px" width="13" height="12" viewBox="0 0 13 12"><rect x="0" y="4.3" width="13" height="3.5" fill="#000"/><rect x="4.8" y="0" width="3.4" height="12" fill="#000"/></svg>
<svg class="a" style="left:1485px;top:752px" width="11" height="13" viewBox="0 0 11 13"><path d="M0 0 L6.8 0 L11 4.2 L11 13 L0 13Z" fill="#000"/><path d="M7.1 0.4 L7.1 3.9 L10.6 3.9Z" fill="#fff"/></svg>
<div class="cell ns" style="left:1560.5px;top:752.5px">(not set)</div>
<div class="cell td" style="left:301px;top:787.0px">6</div>
<svg class="a" style="left:391px;top:786px" width="11" height="13" viewBox="0 0 11 13"><path d="M0 0 L6.8 0 L11 4.2 L11 13 L0 13Z" fill="#000"/><path d="M7.1 0.4 L7.1 3.9 L10.6 3.9Z" fill="#fff"/></svg>
<div class="cell td up" style="left:460.5px;top:787.0px">CLOVEST RETAIL LLC</div>
<div class="cell ns" style="right:657px;top:786.2px">(not set)</div>
<svg class="a" style="left:1329px;top:786px" width="13" height="12" viewBox="0 0 13 12"><rect x="0" y="4.3" width="13" height="3.5" fill="#000"/><rect x="4.8" y="0" width="3.4" height="12" fill="#000"/></svg>
<svg class="a" style="left:1485px;top:786px" width="11" height="13" viewBox="0 0 11 13"><path d="M0 0 L6.8 0 L11 4.2 L11 13 L0 13Z" fill="#000"/><path d="M7.1 0.4 L7.1 3.9 L10.6 3.9Z" fill="#fff"/></svg>
<div class="cell ns" style="left:1560.5px;top:786.2px">(not set)</div>
<div class="cell td" style="left:301px;top:820.1px">7</div>
<svg class="a" style="left:391px;top:819px" width="11" height="13" viewBox="0 0 11 13"><path d="M0 0 L6.8 0 L11 4.2 L11 13 L0 13Z" fill="#000"/><path d="M7.1 0.4 L7.1 3.9 L10.6 3.9Z" fill="#fff"/></svg>
<div class="cell td up" style="left:460.5px;top:820.1px">CNC CONSTRUCTION</div>
<svg class="a" style="left:460px;top:840px" width="12" height="12" viewBox="0 0 12 12"><rect x="0" y="0" width="12" height="12" rx="2" fill="#1f7fd1"/><path d="M2.6 6.2 L4.9 8.6 L9.4 3.2" fill="none" stroke="#fff" stroke-width="1.6" stroke-linecap="round" stroke-linejoin="round"/></svg>
<div class="cell td" style="left:473px;top:840.1px;font-size:10.9px">109703</div>
<div class="cell td" style="left:834.5px;top:838.1px;font-size:11.45px">109703_1732214345_Invoice.pdf</div>
<div class="cell td" style="right:657px;top:820.1px">3,038.33</div>
<svg class="a" style="left:1329px;top:830px" width="13" height="12" viewBox="0 0 13 12"><rect x="0" y="4.3" width="13" height="3.5" fill="#000"/><rect x="4.8" y="0" width="3.4" height="12" fill="#000"/></svg>
<svg class="a" style="left:1486px;top:830px" width="11" height="13" viewBox="0 0 11 13"><path d="M0 0 L6.8 0 L11 4.2 L11 13 L0 13Z" fill="#000"/><path d="M7.1 0.4 L7.1 3.9 L10.6 3.9Z" fill="#fff"/></svg>
<div class="cell td" style="left:301px;top:873.0px">8</div>
<svg class="a" style="left:391px;top:872px" width="11" height="13" viewBox="0 0 11 13"><path d="M0 0 L6.8 0 L11 4.2 L11 13 L0 13Z" fill="#000"/><path d="M7.1 0.4 L7.1 3.9 L10.6 3.9Z" fill="#fff"/></svg>
<div class="cell td up" style="left:460.5px;top:873.0px">EXPRESS INNOVATION LLC</div>
<svg class="a" style="left:460px;top:893px" width="12" height="12" viewBox="0 0 12 12"><rect x="0" y="0" width="12" height="12" rx="2" fill="#1f7fd1"/><path d="M2.6 6.2 L4.9 8.6 L9.4 3.2" fill="none" stroke="#fff" stroke-width="1.6" stroke-linecap="round" stroke-linejoin="round"/></svg>
<div class="cell td" style="left:473px;top:893.0px;font-size:10.9px">109701</div>
<div class="cell td" style="left:834.5px;top:891.0px;font-size:11.45px">109701_1732214344_Invoice.pdf</div>
<div class="cell td" style="right:657px;top:873.0px">17,280.90</div>
<svg class="a" style="left:1329px;top:883px" width="13" height="12" viewBox="0 0 13 12"><rect x="0" y="4.3" width="13" height="3.5" fill="#000"/><rect x="4.8" y="0" width="3.4" height="12" fill="#000"/></svg>
<svg class="a" style="left:1486px;top:882px" width="11" height="13" viewBox="0 0 11 13"><path d="M0 0 L6.8 0 L11 4.2 L11 13 L0 13Z" fill="#000"/><path d="M7.1 0.4 L7.1 3.9 L10.6 3.9Z" fill="#fff"/></svg>
</div></div></body></html>
